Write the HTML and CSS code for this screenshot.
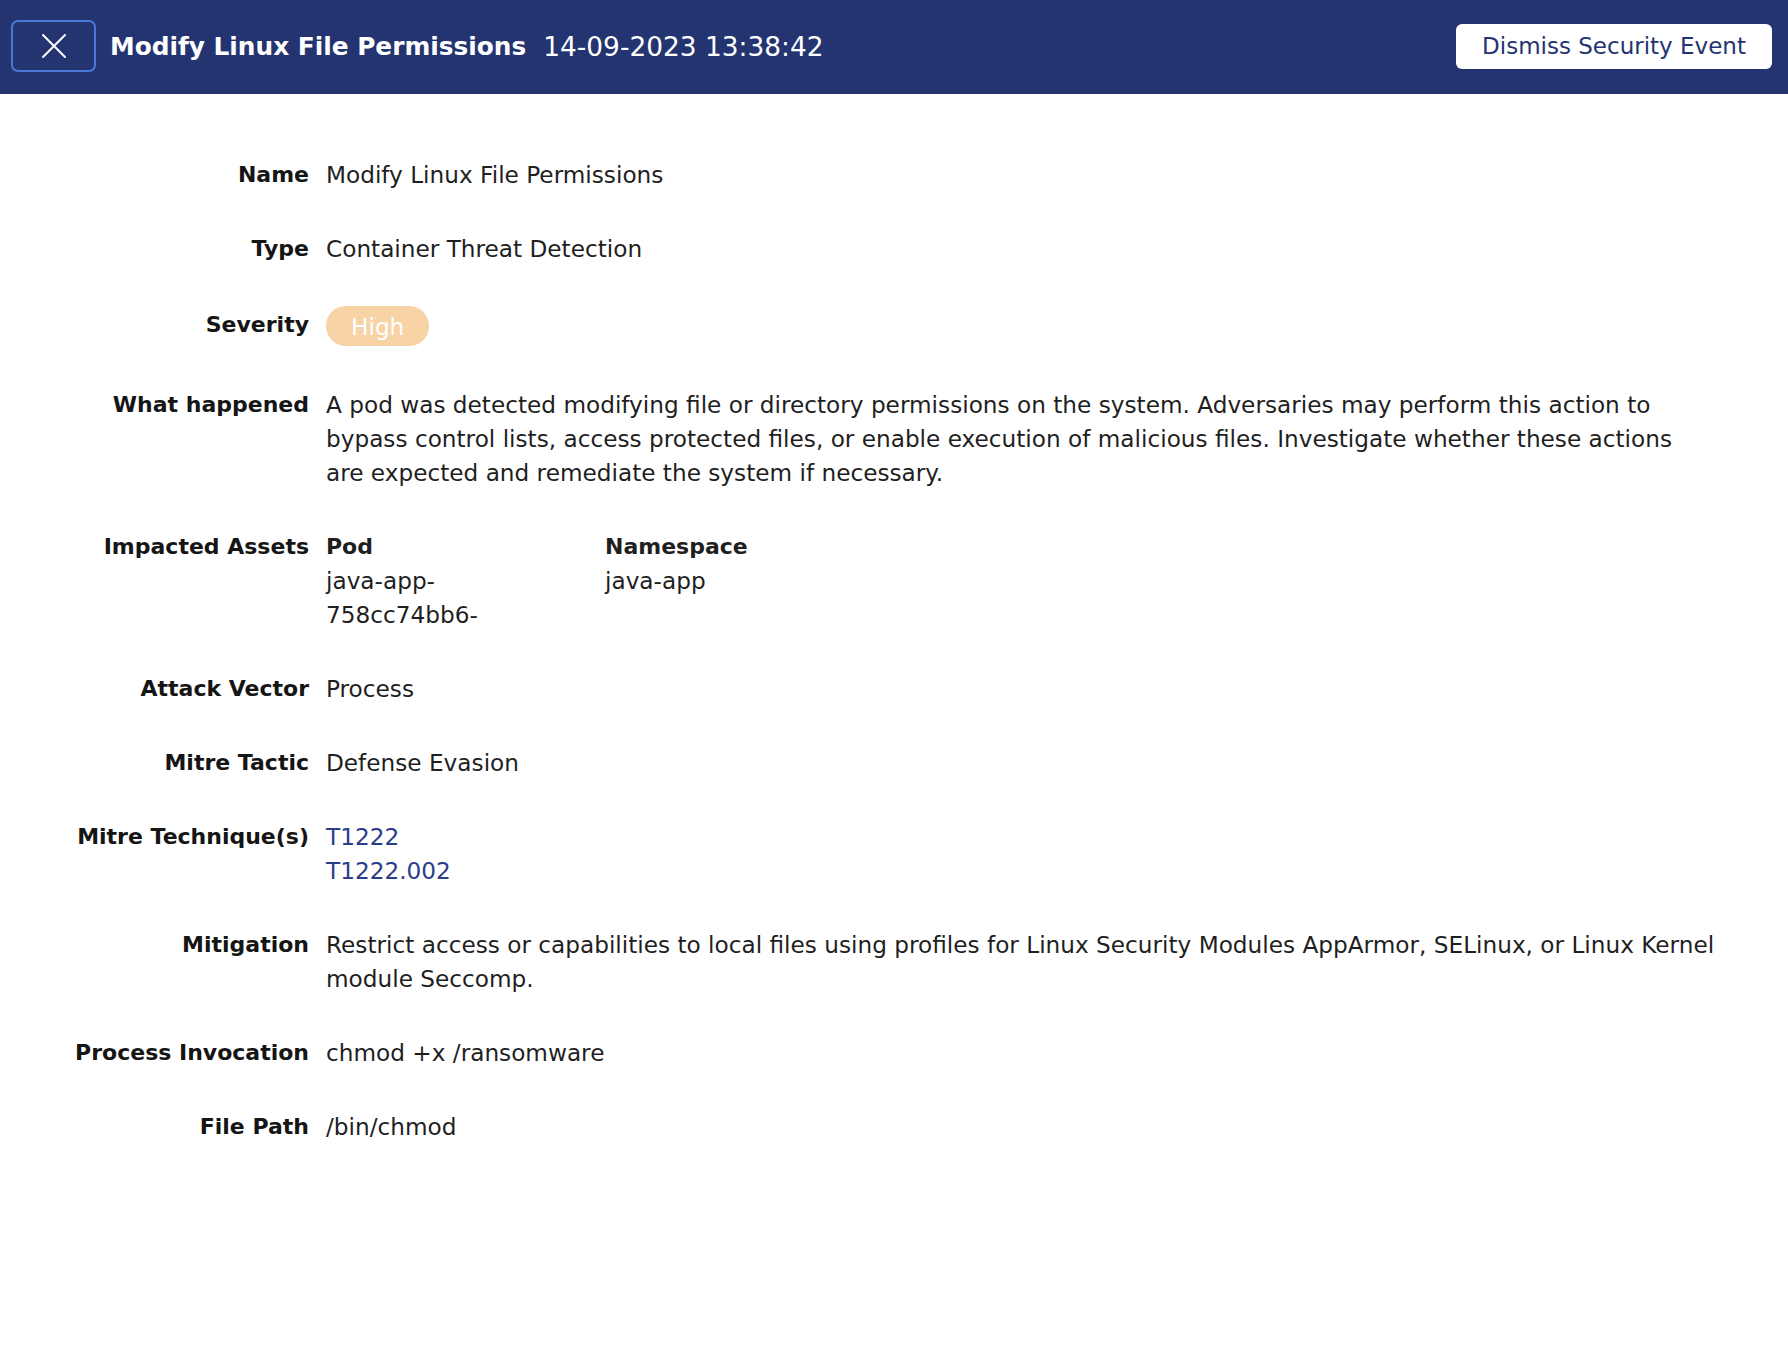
FILE: index.html
```html
<!DOCTYPE html>
<html lang="en">
<head>
<meta charset="UTF-8">
<title>Security Event</title>
<link rel="stylesheet" href="styles.css">
</head>
<body>
    <!-- Top bar -->
    <header class="event-bar">
        <button class="close-btn" aria-label="Close">
            <svg width="26" height="26" viewBox="0 0 26 26">
                <path d="M2 2 L24 24 M24 2 L2 24" stroke="#fff" stroke-width="2" stroke-linecap="round"/>
            </svg>
        </button>
        <h1 class="event-title">Modify Linux File Permissions</h1>
        <span class="event-time">14-09-2023 13:38:42</span>
        <button class="dismiss-btn">Dismiss Security Event</button>
    </header>

    <!-- Event details -->
    <div class="details">
        <div class="label">Name</div>
        <div class="value">Modify Linux File Permissions</div>

        <div class="label">Type</div>
        <div class="value">Container Threat Detection</div>

        <div class="label label-badge">Severity</div>
        <div class="value"><span class="badge badge-high">High</span></div>

        <div class="label">What happened</div>
        <div class="value">A pod was detected modifying file or directory permissions on the system. Adversaries may perform this action to bypass control lists, access protected files, or enable execution of malicious files. Investigate whether these actions are expected and remediate the system if necessary.</div>

        <div class="label">Impacted Assets</div>
        <div class="value assets">
            <div class="asset asset-pod">
                <strong>Pod</strong>
                <span>java-app-758cc74bb6-</span>
            </div>
            <div class="asset">
                <strong>Namespace</strong>
                <span>java-app</span>
            </div>
        </div>

        <div class="label">Attack Vector</div>
        <div class="value">Process</div>

        <div class="label">Mitre Tactic</div>
        <div class="value">Defense Evasion</div>

        <div class="label">Mitre Technique(s)</div>
        <div class="value links">
            <a href="#">T1222</a>
            <a href="#">T1222.002</a>
        </div>

        <div class="label">Mitigation</div>
        <div class="value">Restrict access or capabilities to local files using profiles for Linux Security Modules AppArmor, SELinux, or Linux Kernel module Seccomp.</div>

        <div class="label">Process Invocation</div>
        <div class="value">chmod +x /ransomware</div>

        <div class="label">File Path</div>
        <div class="value">/bin/chmod</div>
    </div>
</body>
</html>
```

FILE: styles.css
```css
body {
    margin: 0;
    font-family: "DejaVu Sans", Arial, sans-serif;
    background-color: #fff;
    color: #1b1b1b;
}

/* Top bar */
.event-bar {
    display: flex;
    align-items: center;
    height: 94px;
    padding: 0 16px 2px 11px;
    background-color: #243471;
    color: #fff;
    box-sizing: border-box;
}

.close-btn {
    display: flex;
    align-items: center;
    justify-content: center;
    width: 85px;
    height: 52px;
    margin-right: 14px;
    background: transparent;
    border: 2.5px solid #4a78d8;
    border-radius: 7px;
    cursor: pointer;
}

.event-title {
    margin: 0;
    font-size: 24.8px;
    font-weight: 700;
}

.event-time {
    margin-left: 17px;
    font-size: 26.4px;
    font-weight: 400;
}

.dismiss-btn {
    margin-left: auto;
    width: 316px;
    height: 45px;
    background-color: #fff;
    color: #243471;
    border: none;
    border-radius: 6px;
    font-family: inherit;
    font-size: 23px;
    cursor: pointer;
}

/* Details list */
.details {
    display: grid;
    grid-template-columns: 309px 1fr;
    column-gap: 17px;
    row-gap: 40px;
    padding: 64px 72px 60px 0;
    font-size: 23.2px;
    line-height: 34px;
}

.label {
    text-align: right;
    font-size: 22px;
    font-weight: 700;
    color: #151515;
}

/* keeps the label centred on the taller pill */
.label-badge {
    padding-top: 2px;
}

.value {
    color: #1f1f1f;
}

.badge {
    display: inline-block;
    height: 40px;
    margin-bottom: 2px;
    padding: 0 25px;
    border-radius: 20px;
    line-height: 41px;
    vertical-align: top;
}

.badge-high {
    background-color: #f7d3a6;
    color: #fff;
}

.assets {
    display: flex;
}

.asset {
    display: flex;
    flex-direction: column;
    width: 279px;
}

.asset-pod span {
    max-width: 200px;
}

.asset strong {
    font-size: 22px;
}

.links {
    display: flex;
    flex-direction: column;
    align-items: flex-start;
}

.links a {
    color: #2b3d8a;
    text-decoration: none;
}
```
